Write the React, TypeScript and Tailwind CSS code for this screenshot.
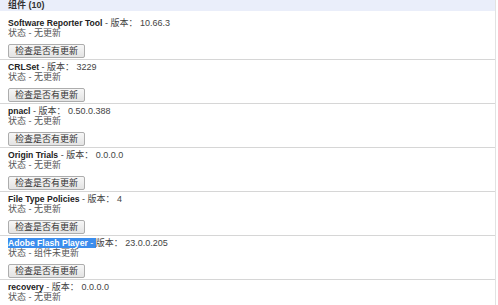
import React from 'react'

interface Component {
  name: string
  version: string
  status: string
  selected?: boolean
}

const COMPONENTS: Component[] = [
  { name: 'Software Reporter Tool', version: '10.66.3', status: '无更新' },
  { name: 'CRLSet', version: '3229', status: '无更新' },
  { name: 'pnacl', version: '0.50.0.388', status: '无更新' },
  { name: 'Origin Trials', version: '0.0.0.0', status: '无更新' },
  { name: 'File Type Policies', version: '4', status: '无更新' },
  { name: 'Adobe Flash Player', version: '23.0.0.205', status: '组件未更新', selected: true },
  { name: 'recovery', version: '0.0.0.0', status: '无更新' },
]

function Row({ c, first }: { c: Component; first: boolean }) {
  return (
    <div className={`border-b border-[#d6d6d6] px-2 pb-[1px] ${first ? 'pt-[7px]' : 'pt-[2px]'}`}>
      <div className="h-[10px] leading-[10px] whitespace-nowrap text-[#444]">
        {c.selected ? (
          <span className="bg-[#3b8ded] text-white">
            <span className="text-[8.6px] font-bold">{c.name}</span> -{' '}
          </span>
        ) : (
          <>
            <span className="text-[8.6px] font-bold text-[#222]">{c.name}</span> -{' '}
          </>
        )}
        版本： {c.version}
      </div>
      <div className="h-[10px] leading-[10px] text-[#555]">状态 - {c.status}</div>
      <button className="mt-[6px] flex h-[14px] items-center rounded-[2px] border border-[#adadad] bg-gradient-to-b from-[#f7f7f7] to-[#e3e3e3] px-[6px] leading-[12px] text-[#333]">
        检查是否有更新
      </button>
    </div>
  )
}

export default function App() {
  return (
    <div
      className="h-[305px] w-[498px] overflow-hidden bg-white text-[9px]"
      style={{ fontFamily: '"Liberation Sans", "Noto Sans CJK SC", sans-serif' }}
    >
      <div className="w-[496px] border-r border-[#e2e2e2]">
        <div className="h-[11px] bg-[#eaeefa] px-2 font-bold leading-[11px] text-[#333]">组件 (10)</div>
        {COMPONENTS.map((c, i) => (
          <Row key={c.name} c={c} first={i === 0} />
        ))}
      </div>
    </div>
  )
}
